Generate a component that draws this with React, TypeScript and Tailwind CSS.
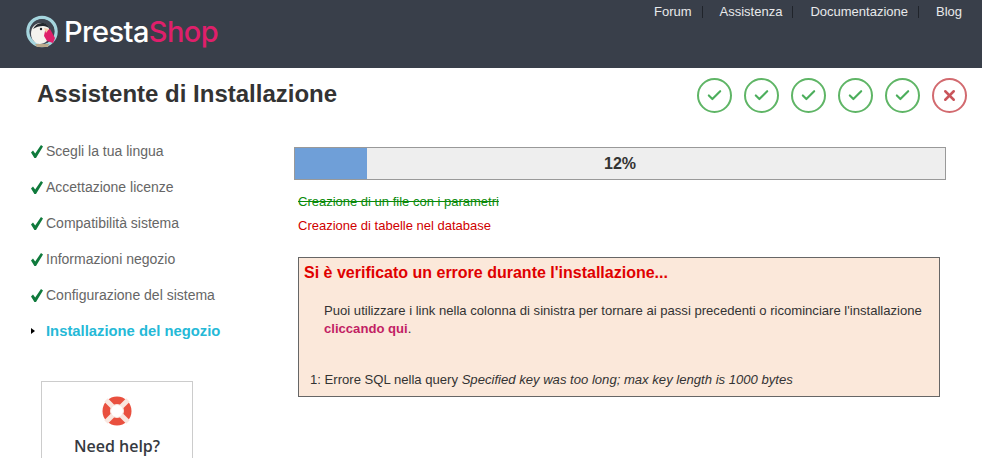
import { Check, X } from 'lucide-react';

const links = ['Forum', 'Assistenza', 'Documentazione', 'Blog'];
const steps = [
  'Scegli la tua lingua',
  'Accettazione licenze',
  'Compatibilità sistema',
  'Informazioni negozio',
  'Configurazione del sistema',
];

function Puffin() {
  return (
    <svg width="34" height="34" viewBox="0 0 34 34" className="shrink-0">
      <circle cx="17" cy="16.5" r="14" fill="none" stroke="#a5d5de" strokeWidth="3.5" />
      <circle cx="17" cy="16.5" r="12.5" fill="#3f4550" />
      <path d="M6 19c0-7 4-11 10-11 5 0 8 3 8 7l-2 11c-3 3-8 4-11 2-3-2-5-5-5-9z" fill="#f4f2ee" />
      <path d="M8 14c2-4 5-6 9-6 4 0 6 2 7 5-2-1-3-2-6-2-4 0-7 1-10 3z" fill="#23272e" />
      <path d="M20 16l5-2 5 9-2 5-6-2-3-5z" fill="#df1f6b" />
      <path d="M19 13l5 1-3 4z" fill="#f6c9a8" />
      <circle cx="16" cy="14" r="1.2" fill="#23272e" />
      <path d="M10 29h14l-1 3H12z" fill="#b9a98c" />
    </svg>
  );
}

function Lifebuoy() {
  return (
    <svg width="30" height="30" viewBox="0 0 30 30">
      <circle cx="15" cy="15" r="14.5" fill="#e9503f" />
      <path d="M4 4l7 7M26 4l-7 7M4 26l7-7M26 26l-7-7" stroke="#f9e6df" strokeWidth="5" />
      <circle cx="15" cy="15" r="6.5" fill="#fff" />
      <circle cx="15" cy="15" r="6.5" fill="none" stroke="#f9e6df" strokeWidth="1" />
    </svg>
  );
}

function StepCheck() {
  return (
    <svg width="12" height="13" viewBox="0 0 12 13" className="mr-[3px] ml-[1px] shrink-0">
      <path d="M0 7.5L2 5.5L4.2 8.5L10 0L12 1.5L5 13H3.4z" fill="#0f7a3c" />
    </svg>
  );
}

export default function App() {
  return (
    <div className="h-[458px] w-[982px] overflow-hidden bg-white font-['Liberation_Sans',Arial,sans-serif]">
      <header className="flex h-[68px] items-start justify-between bg-[#393f4a] pl-[25px] pr-[20px]">
        <div className="mt-[15px] flex items-center gap-[5px]">
          <Puffin />
          <span className="font-['Inter',sans-serif] text-[29px] font-medium leading-[34px] tracking-[-0.6px] text-white">
            Presta<span className="text-[#df1f6b]">Shop</span>
          </span>
        </div>
        <nav className="mt-[6px] flex text-[13px] leading-[12px] text-[#e8e9eb]">
          {links.map((link, i) => (
            <span key={link} className={i < 3 ? 'mr-[17px] border-r border-[#20242b] pr-[10px]' : ''}>
              {link}
            </span>
          ))}
        </nav>
      </header>

      <div className="flex h-[45px] items-end justify-between pl-[37px] pr-[15px]">
        <h1 className="mb-[4px] text-[24px] font-bold leading-[30px] text-[#333]">Assistente di Installazione</h1>
        <div className="flex gap-[12px]">
          {[0, 1, 2, 3, 4].map((n) => (
            <div key={n} className="flex size-[35px] items-center justify-center rounded-full border-2 border-[#5fb566] text-[#4cae5c]">
              <Check size={17} strokeWidth={3} />
            </div>
          ))}
          <div className="flex size-[35px] items-center justify-center rounded-full border-2 border-[#d26a6f] text-[#c9555b]">
            <X size={17} strokeWidth={3.5} />
          </div>
        </div>
      </div>

      <div className="flex pt-[28px]">
        <aside className="w-[294px] shrink-0">
          <ul className="pl-[30px] text-[14px] leading-[20px] text-[#666]">
            {steps.map((step) => (
              <li key={step} className="mb-[16px] flex items-center">
                <StepCheck />
                {step}
              </li>
            ))}
            <li className="flex items-center text-[14.8px] font-bold text-[#25b9d7]">
              <span className="mr-[11px] ml-[1px] h-0 w-0 border-y-[3px] border-l-[4px] border-y-transparent border-l-black" />
              Installazione del negozio
            </li>
          </ul>
          <div className="ml-[41px] mt-[40px] flex h-[100px] w-[152px] flex-col items-center border border-[#ccc] pt-[14px]">
            <Lifebuoy />
            <span className="mt-[8px] font-['Open_Sans',sans-serif] text-[16px] font-semibold leading-[24px] text-[#363a41]">Need help?</span>
          </div>
        </aside>

        <main className="mt-[6px] w-[652px]">
          <div className="relative h-[33px] border border-[#999] bg-[#eee]">
            <div className="h-full w-[72px] bg-[#6f9fd8]" />
            <span className="absolute inset-0 flex items-center justify-center text-[16px] font-bold text-[#333]">12%</span>
          </div>
          <div className="ml-[4px] w-[642px]">
            <p className="mt-[13px] text-[13px] leading-[18px] text-[#0a8a0a] line-through">Creazione di un file con i parametri</p>
            <p className="mt-[6px] text-[13px] leading-[18px] text-[#d00000]">Creazione di tabelle nel database</p>
            <div className="mt-[22px] h-[140px] border border-[#666] bg-[#fbe8da] text-[13.1px] leading-[18px] text-[#333]">
              <h2 className="ml-[5px] mt-[5px] text-[16px] font-bold leading-[20px] text-[#e00000]">Si è verificato un errore durante l'installazione...</h2>
              <p className="ml-[25px] mr-[16px] mt-[19px]">
                Puoi utilizzare i link nella colonna di sinistra per tornare ai passi precedenti o ricominciare l'installazione{' '}
                <b className="text-[#c21e64]">cliccando qui</b>.
              </p>
              <p className="ml-[11px] mt-[33px]">
                1: Errore SQL nella query <i>Specified key was too long; max key length is 1000 bytes</i>
              </p>
            </div>
          </div>
        </main>
      </div>
    </div>
  );
}
